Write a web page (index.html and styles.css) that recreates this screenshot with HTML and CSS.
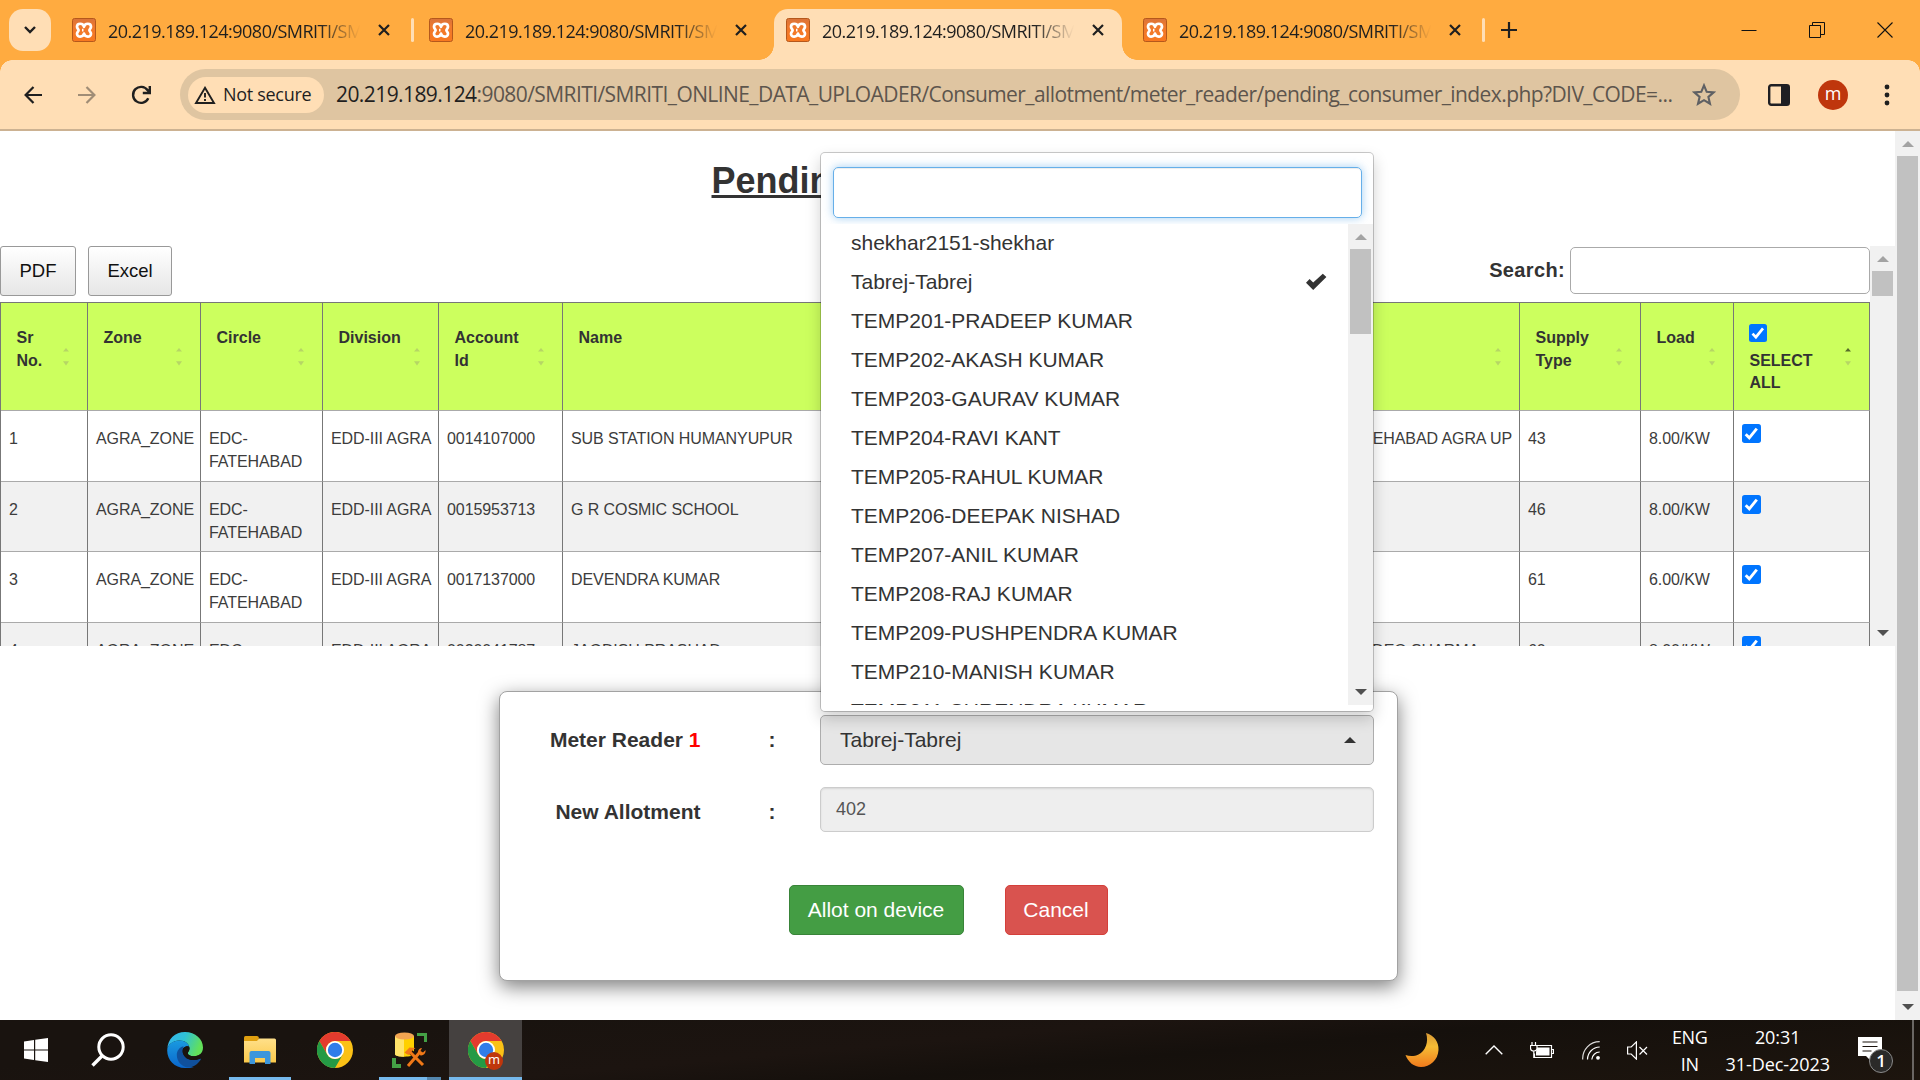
FILE: index.html
```html
<!DOCTYPE html>
<html lang="en">
<head>
<meta charset="utf-8">
<title>Pending Consumer</title>
<link rel="stylesheet" href="styles.css">
</head>
<body>
<svg class="defs" width="0" height="0">
  <defs>
    <linearGradient id="xg" x1="0" y1="0" x2="0" y2="1"><stop offset="0" stop-color="#d9733a"/><stop offset=".35" stop-color="#f07a2e"/><stop offset="1" stop-color="#f8781e"/></linearGradient>
    <linearGradient id="edgeTop" x1="0" y1="0" x2="1" y2=".3"><stop offset="0" stop-color="#36b5f0"/><stop offset=".5" stop-color="#2fc2d6"/><stop offset="1" stop-color="#62e05a"/></linearGradient>
    <linearGradient id="edgeLow" x1="0" y1="0" x2="0" y2="1"><stop offset="0" stop-color="#1a9ae0"/><stop offset="1" stop-color="#0a66cc"/></linearGradient>
    <linearGradient id="moon" x1="0" y1="0" x2="0" y2="1"><stop offset="0" stop-color="#d99a35"/><stop offset=".4" stop-color="#f5bc35"/><stop offset="1" stop-color="#f07a1c"/></linearGradient>
    <linearGradient id="folder" x1="0" y1="0" x2="0" y2="1"><stop offset="0" stop-color="#ffe08a"/><stop offset="1" stop-color="#fbc94a"/></linearGradient>
    <symbol id="xampp" viewBox="0 0 24 24">
      <rect x=".5" y=".5" width="23" height="23" rx="2" fill="url(#xg)" stroke="#b5581c"/>
      <path d="M12 8.800C11.200 4.700 5 4.800 5 8.700C5 10.600 6.600 11 6.600 12.300C6.600 13.500 5 13.900 5 15.800C5 19.600 11.200 19.600 12 15.600C12.800 19.600 19 19.600 19 15.800C19 13.900 17.400 13.500 17.400 12.300C17.400 11 19 10.600 19 8.700C19 4.800 12.800 4.700 12 8.800ZM10 12.200h1.500" fill="none" stroke="#fff" stroke-width="2.700" stroke-linejoin="round"/>
    </symbol>
    <symbol id="close" viewBox="0 0 12 12"><path d="M1 1l10 10M11 1L1 11" stroke="#1f1f1f" stroke-width="2.2"/></symbol>
    <symbol id="chrome" viewBox="0 0 36 36">
      <circle cx="18" cy="18" r="18" fill="#fbc116"/>
      <path d="M2.4 9A18 18 0 0 1 33.6 9H18a9 9 0 0 0-7.8 13.5z" fill="#e33b2e"/>
      <path d="M2.4 9A18 18 0 0 0 18 36l7.8-13.5A9 9 0 0 1 10.2 22.5z" fill="#249a45"/>
      <circle cx="18" cy="18" r="9" fill="#fff"/><circle cx="18" cy="18" r="7.2" fill="#2f7de9"/>
    </symbol>
    <symbol id="up" viewBox="0 0 12 6"><path d="M6 0l6 6H0z" fill="currentColor"/></symbol>
    <symbol id="down" viewBox="0 0 12 6"><path d="M0 0h12L6 6z" fill="currentColor"/></symbol>
    <symbol id="sort" viewBox="0 0 6 18"><path class="s-up" d="M3 0l3 3.400H0z"/><path class="s-down" d="M0 13.200h6L3 17.600z"/></symbol>
    <symbol id="check" viewBox="0 0 18 18"><rect width="18" height="18" rx="2.500" fill="#0075ff"/><path d="M3.500 9.600l3.400 3.500L14 4.300" fill="none" stroke="#fff" stroke-width="2.700"/></symbol>
  </defs>
</svg>

<header class="frame">
  <button class="tab-search"><svg width="12" height="8" viewBox="0 0 12 8"><path d="M1 1l5 5 5-5" fill="none" stroke="#1f1f1f" stroke-width="2.400"/></svg></button>
  <div class="tabs">
    <div class="tab"><svg class="fav"><use href="#xampp"/></svg><span class="tab-title"><b>20.219.189.124:9080/SMRITI/SMRITI</b></span><svg class="x"><use href="#close"/></svg><i class="sep"></i></div>
    <div class="tab"><svg class="fav"><use href="#xampp"/></svg><span class="tab-title"><b>20.219.189.124:9080/SMRITI/SMRITI</b></span><svg class="x"><use href="#close"/></svg></div>
    <div class="tab active"><svg class="fav"><use href="#xampp"/></svg><span class="tab-title"><b>20.219.189.124:9080/SMRITI/SMRITI</b></span><svg class="x"><use href="#close"/></svg></div>
    <div class="tab"><svg class="fav"><use href="#xampp"/></svg><span class="tab-title"><b>20.219.189.124:9080/SMRITI/SMRITI</b></span><svg class="x"><use href="#close"/></svg><i class="sep"></i></div>
  </div>
  <svg class="plus" width="16" height="16" viewBox="0 0 16 16"><path d="M8 0v16M0 8h16" stroke="#1f1f1f" stroke-width="2.200"/></svg>
  <div class="win">
    <svg width="16" height="16"><path d="M.5 8.500h15" stroke="#111" stroke-width="1"/></svg>
    <svg width="16" height="16"><path d="M.5 3.500h11v12h-11zM3.500 3.500v-3h12v12h-4" fill="none" stroke="#111"/></svg>
    <svg width="16" height="16"><path d="M.5.5l15 15M15.500.5l-15 15" stroke="#111" stroke-width="1.100"/></svg>
  </div>
</header>

<nav class="toolbar">
  <svg class="nav-i" width="18" height="18" viewBox="0 0 18 18"><path d="M18 9H2M9.500 1L1.600 9l7.900 8" fill="none" stroke="#1f1f1f" stroke-width="2.200"/></svg>
  <svg class="nav-i" width="18" height="18" viewBox="0 0 18 18"><path d="M0 9h16M8.500 1l7.900 8-7.900 8" fill="none" stroke="#a08d76" stroke-width="2.200"/></svg>
  <svg class="nav-i" width="20" height="20" viewBox="0 0 20 20"><path d="M17.300 13.300A8 8 0 1 1 16.600 5.200L18.500 7.200M18.800 1v7h-7" fill="none" stroke="#1f1f1f" stroke-width="2.400"/></svg>
  <div class="omnibox">
    <div class="chip"><svg width="22" height="18" viewBox="0 0 22 18"><path d="M11 1.800L20 17H2z" fill="none" stroke="#1f1f1f" stroke-width="1.900"/><path d="M11 7v4.500M11 13v2" stroke="#1f1f1f" stroke-width="1.900"/></svg><span>Not secure</span></div>
    <div class="url"><span class="host">20.219.189.124</span><span>:9080/SMRITI/SMRITI_ONLINE_DATA_UPLOADER/Consumer_allotment/meter_reader/pending_consumer_index.php?DIV_CODE=...</span></div>
    <svg class="star" width="24" height="23" viewBox="0 0 24 23"><path d="M12 2.400l2.700 6.400 6.900.6-5.200 4.500 1.600 6.800-6-3.600-6 3.600 1.600-6.800L2.400 9.400l6.900-.6z" fill="none" stroke="#5f6063" stroke-width="2.100"/></svg>
  </div>
  <svg class="panel" width="22" height="22" viewBox="0 0 22 22"><rect x="1.200" y="1.200" width="19.600" height="19.600" rx="2" fill="none" stroke="#1f1f23" stroke-width="2.400"/><path d="M13 1h8v20h-8z" fill="#1f1f23"/></svg>
  <span class="avatar">m</span>
  <svg class="dots" width="6" height="22"><circle cx="3" cy="3" r="2.400"/><circle cx="3" cy="11" r="2.400"/><circle cx="3" cy="19" r="2.400"/></svg>
</nav>

<div class="viewport">
  <main class="page">
    <h1><u>Pending Consumer List</u></h1>
    <section class="grid-scroll">
      <div class="grid-body">
        <div class="tools">
          <button class="dt">PDF</button><button class="dt">Excel</button>
          <label class="search">Search:<input type="text"></label>
        </div>
        <table>
          <colgroup><col class="c1"><col class="c2"><col class="c3"><col class="c4"><col class="c5"><col class="c6"><col class="c7"><col class="c8"><col class="c9"><col class="c10"></colgroup>
          <thead><tr>
            <th><div>Sr<br>No.<svg class="sort"><use href="#sort"/></svg></div></th>
            <th><div>Zone<svg class="sort"><use href="#sort"/></svg></div></th>
            <th><div>Circle<svg class="sort"><use href="#sort"/></svg></div></th>
            <th><div>Division<svg class="sort"><use href="#sort"/></svg></div></th>
            <th><div>Account<br>Id<svg class="sort"><use href="#sort"/></svg></div></th>
            <th><div>Name<svg class="sort"><use href="#sort"/></svg></div></th>
            <th><div><svg class="sort"><use href="#sort"/></svg></div></th>
            <th><div>Supply<br>Type<svg class="sort"><use href="#sort"/></svg></div></th>
            <th><div>Load<svg class="sort"><use href="#sort"/></svg></div></th>
            <th><div class="sel"><svg class="cb"><use href="#check"/></svg>SELECT<br>ALL<svg class="sort asc"><use href="#sort"/></svg></div></th>
          </tr></thead>
          <tbody>
            <tr><td>1</td><td>AGRA_ZONE</td><td>EDC-<br>FATEHABAD</td><td>EDD-III AGRA</td><td>0014107000</td><td>SUB STATION HUMANYUPUR</td><td class="addr">FATEHABAD AGRA UP</td><td>43</td><td>8.00/KW</td><td class="chk"><svg class="cb"><use href="#check"/></svg></td></tr>
            <tr><td>2</td><td>AGRA_ZONE</td><td>EDC-<br>FATEHABAD</td><td>EDD-III AGRA</td><td>0015953713</td><td>G R COSMIC SCHOOL</td><td></td><td>46</td><td>8.00/KW</td><td class="chk"><svg class="cb"><use href="#check"/></svg></td></tr>
            <tr><td>3</td><td>AGRA_ZONE</td><td>EDC-<br>FATEHABAD</td><td>EDD-III AGRA</td><td>0017137000</td><td>DEVENDRA KUMAR</td><td></td><td>61</td><td>6.00/KW</td><td class="chk"><svg class="cb"><use href="#check"/></svg></td></tr>
            <tr><td>4</td><td>AGRA_ZONE</td><td>EDC-<br>FATEHABAD</td><td>EDD-III AGRA</td><td>0020041787</td><td>JAGDISH PRASHAD</td><td class="addr deo">DEO SHARMA</td><td>60</td><td>8.00/KW</td><td class="chk"><svg class="cb"><use href="#check"/></svg></td></tr>
          </tbody>
        </table>
      </div>
      <div class="bar"><svg class="ar dim"><use href="#up"/></svg><i class="thumb t-grid"></i><svg class="ar last"><use href="#down"/></svg></div>
    </section>

    <section class="modal">
      <div class="form">
        <span class="lbl">Meter Reader <em>1</em></span><span class="colon">:</span>
        <div class="select">
          <span>Tabrej-Tabrej</span><svg class="caret" width="12" height="6"><use href="#up"/></svg>
          <div class="menu">
            <div class="filter"></div>
            <div class="list">
              <ul>
                <li>shekhar2151-shekhar</li>
                <li>Tabrej-Tabrej<svg width="22" height="18" viewBox="0 0 22 18"><path d="M1 9.800L4.600 6l3.600 3.400L17.800.8 21.400 4 8.200 17z" fill="#333"/></svg></li>
                <li>TEMP201-PRADEEP KUMAR</li>
                <li>TEMP202-AKASH KUMAR</li>
                <li>TEMP203-GAURAV KUMAR</li>
                <li>TEMP204-RAVI KANT</li>
                <li>TEMP205-RAHUL KUMAR</li>
                <li>TEMP206-DEEPAK NISHAD</li>
                <li>TEMP207-ANIL KUMAR</li>
                <li>TEMP208-RAJ KUMAR</li>
                <li>TEMP209-PUSHPENDRA KUMAR</li>
                <li>TEMP210-MANISH KUMAR</li>
                <li>TEMP211-SURENDRA KUMAR</li>
              </ul>
              <div class="bar"><svg class="ar dim"><use href="#up"/></svg><i class="thumb t-list"></i><svg class="ar last"><use href="#down"/></svg></div>
            </div>
          </div>
        </div>
        <span class="lbl low">New Allotment</span><span class="colon low">:</span>
        <div class="ro">402</div>
      </div>
      <div class="actions"><button class="btn ok">Allot on device</button><button class="btn no">Cancel</button></div>
    </section>
  </main>
  <div class="bar page-bar"><svg class="ar dim"><use href="#up"/></svg><i class="thumb t-page"></i><svg class="ar last"><use href="#down"/></svg></div>
</div>

<footer class="taskbar">
  <div class="apps">
    <div class="app w72"><svg width="24" height="24" viewBox="0 0 24 24"><path d="M0 3.400l10-1.400v9.400H0zM11.200 1.800L24 0v11.400H11.200zM0 12.600h10V22L0 20.600zM11.200 12.600H24V24l-12.800-1.800z" fill="#fff"/></svg></div>
    <div class="app w71"><svg width="34" height="34" viewBox="0 0 34 34"><circle cx="20" cy="14" r="12.200" fill="none" stroke="#fff" stroke-width="3"/><path d="M11.500 22.500L1.500 32.500" stroke="#fff" stroke-width="3.400"/></svg></div>
    <div class="app w85"><svg width="36" height="36" viewBox="0 0 36 36">
      <path d="M.4 17C.6 7 8 0 18 0c10.500 0 18 7.200 18 15.500 0 5.500-4 8.700-9 8.700-4 0-6.200-1.400-6.200-3 0-1.200 1.700-1.700 1.700-5C22.500 12 18 8.500 12.500 8.500 5.500 8.500.9 13 .4 17z" fill="url(#edgeTop)"/>
      <path d="M.2 18.500C.2 12.500 6 8.500 12.500 8.500c5 0 8.800 2.600 9.800 6.200-3-1.200-8.300.8-8.300 7.300 0 6 5 13 13 13-3 1-6 1-9 1C7.500 36 .2 28 .2 18.500z" fill="url(#edgeLow)"/>
      <path d="M16.500 14.200C12 15.500 9.800 19 9.800 23c0 7 6 13 13 12.500 5-1 9-4.500 11-8 .4-.8-.3-1.100-1-.8-7.500 3.300-15.500.3-17-6-.5-2.500-.1-4.900.7-6.500z" fill="#10509c"/>
      <path d="M17.500 15.500c2-2 4.800-1.500 5 .7 0 2.600-1.700 3.400-1.700 5 0 1.500 2.200 3 6.200 3 2.500 0 4.500-.6 6-2l1 4.500c-.3-.3-.7-.2-1.200 0-7.500 3.300-15.500.3-17-6-.4-2.200.3-3.800 1.700-5.200z" fill="#1a130f"/></svg></div>
    <div class="app w61 run"><svg width="32" height="28" viewBox="0 0 32 28"><path d="M0 1.500Q0 0 1.500 0H13q1.500 0 2 2l-1 3H0z" fill="#e0a010"/><path d="M0 5h13l2-2.500h15.500Q32 2.500 32 4v22.500H0z" fill="url(#folder)"/><path d="M5.500 28V17q0-2 2-2h17q2 0 2 2v11h-5.500v-6H11v6z" fill="#3c96dc"/></svg></div>
    <div class="app w88"><svg width="36" height="36"><use href="#chrome"/></svg></div>
    <div class="app w61 run split"><svg width="36" height="36" viewBox="0 0 36 36"><path d="M3 4v18c0 3.500 19 3.500 19 0V4z" fill="#ffd000"/><path d="M3 4v18c0 1.800 4 2.800 9 2.800V4z" fill="#ffe36a"/><ellipse cx="12.500" cy="4" rx="9.500" ry="3.500" fill="#f2a552"/><path d="M25 1h10v9h-3V4h-7zM0 26h4v6h5v4H0z" fill="#44a045"/><path d="M16 34l13-15M18 19l13 14" stroke="#201509" stroke-width="5"/><path d="M16 34l12-14M18 20l13 13" stroke="#f07818" stroke-width="3"/><path d="M12.500 20.500l5-5 6 .5-2 1.500-5 5.500-2-1z" fill="#f07818"/><path d="M26 19.500a4.500 4.500 0 0 1 4-3.500l-1.500 3 2.500 1.500 2.500-2.500a4.500 4.500 0 0 1-5 5.500z" fill="#f07818"/></svg></div>
    <div class="app w73 run on"><svg width="36" height="36" viewBox="0 0 36 36"><use href="#chrome"/></svg><span class="mini">m</span></div>
  </div>
  <div class="tray">
    <svg class="moon" width="34" height="34" viewBox="0 0 34 34"><path d="M21 0c8 2 13 9 12.500 17C33 27 25 34 16 34 9 34 3 29 .5 22c4 1.500 9 1.500 13-.5C20.500 18 24 9 21 0z" fill="url(#moon)"/></svg>
    <svg class="t-up" width="18" height="10"><path d="M.700 9.300L9 1l8.300 8.300" fill="none" stroke="#fff" stroke-width="1.400"/></svg>
    <svg class="t-bat" width="24" height="17" viewBox="0 0 24 17"><path d="M5 3.500h16.500v12H4.500v-4M21.500 7.500H23.500v4h-2" fill="none" stroke="#fff" stroke-width="1.200"/><path d="M7 5.500h12.500v8H6V10z" fill="#fff"/><path d="M2 0v3M5.500 0v3M.5 3.500h6.500v2.500q0 3-3.200 3T.5 6zM3.800 9v7" fill="#1a120d" stroke="#fff" stroke-width="1.200"/></svg>
    <svg class="t-wifi" width="18" height="19" viewBox="0 0 18 19"><g fill="none" stroke="#fff" stroke-width="1.200"><path d="M.700 18.500A17 17 0 0 1 17.700.700" opacity=".85"/><path d="M5.500 18.500A12.500 12.500 0 0 1 17.700 6"/><path d="M9.800 18.500A8 8 0 0 1 17.700 11"/></g><circle cx="16" cy="16.800" r="1.900" fill="#fff"/></svg>
    <svg class="t-vol" width="21" height="19" viewBox="0 0 21 19"><path d="M.6 6h3.600L9.400.900v17.200L4.200 13H.6zM12.500 6l7.500 7.500M20 6l-7.500 7.500" fill="none" stroke="#fff" stroke-width="1.200"/></svg>
    <div class="lang">ENG<br>IN</div>
    <div class="clock">20:31<br>31-Dec-2023</div>
    <div class="note"><svg width="24" height="26" viewBox="0 0 24 26"><path d="M0 0h24v19H14v6l-6-6H0z" fill="#fff"/><path d="M4.500 5h15M4.500 9.500h15M4.500 14h9" stroke="#1a120d" stroke-width="1.200"/></svg><span class="badge">1</span></div>
    <i class="edge"></i>
  </div>
</footer>
</body>
</html>
```
FILE: styles.css
```css
* { box-sizing: border-box; }
body { margin: 0; width: 1920px; height: 1080px; overflow: hidden; display: flex; flex-direction: column; font-family: "Liberation Sans", Arial, sans-serif; color: #333; background: #fff; }
svg { display: block; flex: none; }
.defs { position: absolute; }
button { font-family: inherit; margin: 0; padding: 0; }

/* tab strip */
.frame { flex: none; height: 60px; background: #ffab40; display: flex; align-items: center; font-family: "Open Sans", "Noto Sans", sans-serif; }
.tab-search { width: 42px; height: 42px; margin-left: 9px; border: 0; border-radius: 14px; background: #ffdeb5; display: grid; place-items: center; flex: none; }
.tabs { display: flex; margin-left: 9px; align-self: stretch; }
.tab { width: 357px; display: flex; align-items: center; padding-left: 12px; position: relative; flex: none; }
.fav { width: 24px; height: 24px; margin-right: 12px; }
.tab-title { width: 252px; overflow: hidden; -webkit-mask-image: linear-gradient(90deg, #000 84%, transparent 100%); mask-image: linear-gradient(90deg, #000 84%, transparent 100%); }
.tab-title b { display: block; font-weight: 400; font-size: 18px; letter-spacing: -.52px; white-space: nowrap; color: #1f1f1f; line-height: 24px; padding-top: 2px; }
.x { width: 12px; height: 12px; margin-left: 18px; }
.sep { width: 3px; height: 24px; background: #ffdeb5; border-radius: 2px; margin-left: 21px; }
.tab.active { z-index: 1; }
.tab.active::before { content: ""; position: absolute; z-index: -1; left: 0; top: 9px; width: 348px; height: 51px; background: #ffdeb5; border-radius: 14px 14px 0 0; }
.tab.active::after { content: ""; position: absolute; z-index: -1; left: -15px; bottom: 0; width: 378px; height: 15px; background: radial-gradient(circle at 0 0, transparent 14.5px, #ffdeb5 15px) left / 15px 15px no-repeat, radial-gradient(circle at 100% 0, transparent 14.5px, #ffdeb5 15px) right / 15px 15px no-repeat; }
.plus { margin-left: 13px; }
.win { margin-left: auto; margin-right: 27px; display: flex; gap: 52px; }

/* address bar */
.toolbar { flex: none; height: 71px; background: radial-gradient(circle at 12px 12px, #ffdeb5 11.5px, #ffab40 12px) 0 0 / 12px 12px no-repeat, radial-gradient(circle at 0 12px, #ffdeb5 11.5px, #ffab40 12px) 100% 0 / 12px 12px no-repeat, #ffdeb5; border-bottom: 2px solid #ccb292; display: flex; align-items: center; padding-left: 24px; font-family: "Open Sans", "Noto Sans", sans-serif; }
.nav-i { margin-right: 36px; }
.nav-i:nth-child(3) { margin: 0 36px 0 -1px; }
.omnibox { width: 1560px; height: 51px; margin-left: -7px; border-radius: 26px; background: #dfc5a1; display: flex; align-items: center; padding-left: 8px; }
.chip { width: 136px; height: 36px; border-radius: 18px; background: #ffdeb5; display: flex; align-items: center; padding-left: 6px; gap: 7px; font-size: 18px; color: #1f1f1f; white-space: nowrap; letter-spacing: -.3px; }
.chip span { position: relative; top: -1px; }
.url { width: 1352px; margin-left: 12px; font-size: 21px; letter-spacing: -.58px; white-space: nowrap; color: #5d554d; overflow: hidden; padding-bottom: 1px; }
.host { color: #1f1f1f; }
.star { margin-left: 4px; }
.panel { margin-left: 28px; }
.avatar { width: 30px; height: 30px; border-radius: 50%; background: #bf360c; color: #fff; font-size: 18px; line-height: 26px; text-align: center; margin-left: 28px; }
.dots { margin-left: 36px; fill: #1f1f1f; }

/* page */
.viewport { flex: none; height: 889px; display: flex; }
.page { width: 1895px; overflow: hidden; }
.bar { width: 25px; background: #f1f1f1; display: flex; flex-direction: column; align-items: center; padding: 10px 0 10px; }
.ar { width: 12px; height: 6px; color: #505050; }
.ar.dim { color: #a3a3a3; }
.ar.last { margin-top: auto; }
.thumb { width: 21px; background: #c1c1c1; margin-top: 9px; }
.t-grid { height: 25px; }
.t-list { height: 85px; }
.t-page { height: 835px; }
h1 { margin: 0; height: 115px; padding: 29px 0 0 711.5px; font-size: 36px; line-height: 42px; font-weight: 700; }
.grid-scroll { height: 400px; overflow: hidden; display: flex; }
.grid-body { width: 1870px; overflow: hidden; }
.tools { display: flex; height: 56px; align-items: flex-start; }
.dt { height: 50px; width: 76px; border: 1px solid #999; border-radius: 3px; margin-right: 12px; font-size: 18.500px; color: #111; background: linear-gradient(#fff, #e6e6e6); }
.dt + .dt { width: 84px; }
.search { margin-left: auto; display: flex; align-items: center; gap: 5px; font-size: 20px; font-weight: 700; letter-spacing: .35px; line-height: 49px; }
.search input { width: 300px; height: 47px; border: 1px solid #aaa; border-radius: 5px; }
table { width: 1870px; table-layout: fixed; border-collapse: separate; border-spacing: 0; border-left: 1px solid #777; }
.c1 { width: 87px; } .c2 { width: 113px; } .c3 { width: 122px; } .c4 { width: 116px; } .c5 { width: 124px; }
.c6 { width: 400px; } .c7 { width: 557px; } .c8 { width: 121px; } .c9 { width: 93px; } .c10 { width: 136px; }
th, td { text-align: left; vertical-align: top; font-size: 16px; line-height: 22.860px; white-space: nowrap; border-right: 1px solid #777; border-bottom: 1px solid #aaa; }
th { height: 109px; padding: 0; background: #ccff5e; border-top: 1px solid #777; }
th div { height: 107px; padding: 24px 0 0 15.500px; position: relative; }
th .sel { padding-top: 46.500px; }
.sel .cb { position: absolute; left: 15px; top: 21px; width: 18px; height: 18px; }
.sort { position: absolute; right: 18px; top: 45px; width: 6px; height: 18px; }
.s-up { fill: var(--up, #b6d665); }
.s-down { fill: #b6d665; }
.sort.asc { --up: #566b2a; }
td { height: 70.500px; padding: 17px 7px 7px 8px; letter-spacing: -.08px; color: #3c3c3c; }
tbody tr:nth-child(even) { background: #f1f1f1; }
.addr { text-align: right; }
.deo { padding-right: 40px; }
.chk { padding-top: 13px; }
.chk .cb { width: 19px; height: 19px; }

/* allotment box */
.modal { width: 899px; height: 290px; margin: 45px 0 0 498.500px; border: 1px solid #a2a2a2; border-radius: 8px; background: #fff; box-shadow: 0 6px 19px rgba(0,0,0,.5); }
.form { display: grid; grid-template-columns: 205px 115px 554px; grid-template-rows: 50px 45px; row-gap: 22px; padding-top: 23px; font-size: 21px; align-items: start; }
.lbl { text-align: right; padding-right: 4px; font-weight: 700; line-height: 49px; white-space: nowrap; }
.lbl em { color: #f00; font-style: normal; }
.low.low { line-height: 50px; }
.colon { font-weight: 700; line-height: 49px; padding-left: 64px; }
.select { position: relative; height: 50px; margin-left: .5px; border: 1px solid #adadad; border-radius: 5px; background: #e6e6e6; display: flex; align-items: center; justify-content: space-between; padding: 0 17px 0 19px; }
.caret { color: #333; }
.ro { height: 45px; margin-left: .5px; border: 1px solid #ccc; border-radius: 5px; background: #eee; box-shadow: inset 0 1px 2px rgba(0,0,0,.1); color: #555; font-size: 18px; line-height: 42px; padding-left: 15px; }
.menu { position: absolute; left: -1px; bottom: 52px; width: 554px; height: 560px; background: #fff; border: 1px solid rgba(0,0,0,.2); border-radius: 5px; box-shadow: 0 7px 15px rgba(0,0,0,.18); padding-top: 14px; background-clip: padding-box; }
.filter { width: 529px; height: 51px; margin: 0 auto; border: 1px solid #66afe9; border-radius: 5px; box-shadow: inset 0 1px 1px rgba(0,0,0,.075), 0 0 10px rgba(102,175,233,.6); }
.list { height: 481px; margin-top: 6px; display: flex; overflow: hidden; background: #fff; position: relative; }
.list ul { flex: 1; margin: 0; padding: 0; list-style: none; }
.list li { height: 39px; padding: 0 21px 0 30px; line-height: 37px; display: flex; align-items: center; justify-content: space-between; }
.list li:first-child { height: 38px; line-height: 36px; }
.actions { display: flex; justify-content: center; gap: 41px; margin-top: 53px; }
.btn { height: 50px; font-size: 21px; color: #fff; border-radius: 5px; width: 175px; border: 1px solid; }
.ok { background: #449d44; border-color: #398439; }
.no { width: 103px; background: #d9534f; border-color: #d43f3a; }

/* taskbar */
.taskbar { flex: none; height: 60px; background: linear-gradient(175deg, #19130f 20%, #1c1410 45%, #15100c 60%, #1d150e); display: flex; justify-content: space-between; color: #fff; }
.apps { display: flex; }
.app { height: 60px; display: grid; place-items: center; position: relative; }
.w72 { width: 72px; } .w71 { width: 71px; } .w85 { width: 85px; padding-right: 1px; } .w61 { width: 62px; } .w88 { width: 88px; } .w73 { width: 73px; }
.w85 { margin-right: 1px; }
.w85 svg { margin-left: -1px; }
.run { border-bottom: 3px solid #76b9ed; padding-top: 3px; }
.split { margin-right: 8px; border-image: linear-gradient(90deg, #76b9ed 77%, #5486ae 77%) 1; border-width: 0 0 3px; }
.on { background: #454140; }
.mini { position: absolute; right: 19px; bottom: 7px; width: 18px; height: 18px; border-radius: 50%; background: #bf360c; font: 13px/15px "Open Sans", sans-serif; text-align: center; }
.tray { display: flex; align-items: center; font-family: "Open Sans", "Noto Sans", sans-serif; font-size: 18px; line-height: 27px; text-align: center; }
.t-up { margin-left: 46px; }
.t-bat { margin-left: 27px; }
.t-wifi { margin-left: 28px; }
.t-vol { margin-left: 27px; }
.lang { margin-left: 24px; letter-spacing: -.4px; padding-top: 1px; }
.clock { margin-left: 18px; letter-spacing: -.05px; padding-top: 1px; }
.note { position: relative; margin-left: 28px; }
.badge { position: absolute; left: 11px; top: 12px; width: 24px; height: 24px; border-radius: 50%; background: #2b2a29; border: 1px solid #8a8a8a; font-size: 17px; font-weight: 600; line-height: 21px; }
.edge { width: 2px; height: 60px; background: #6a6663; margin: 0 6px 0 30px; }
```
